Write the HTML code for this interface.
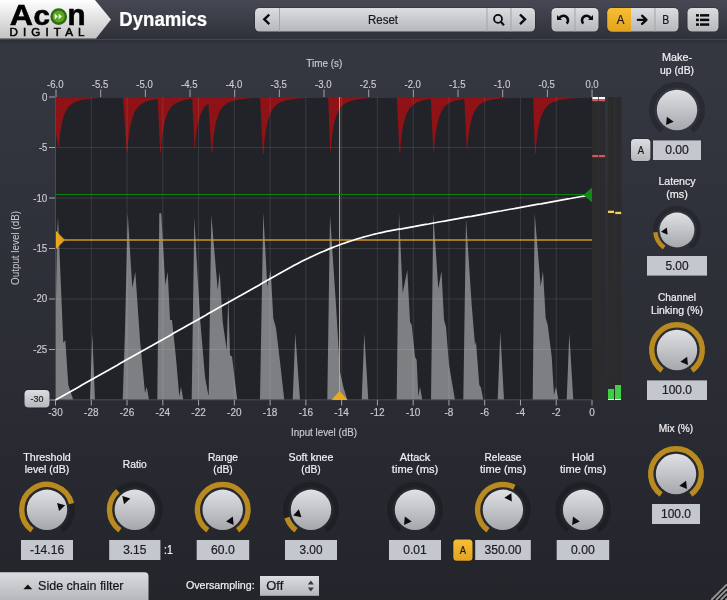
<!DOCTYPE html>
<html><head><meta charset="utf-8"><title>Dynamics</title><style>html,body{margin:0;padding:0;background:#24252b;overflow:hidden}svg{display:block;will-change:transform}</style></head><body>
<svg width="727" height="600" viewBox="0 0 727 600" font-family="Liberation Sans, sans-serif">
<defs>
<linearGradient id="gBody" x1="0" y1="0" x2="0" y2="1"><stop offset="0" stop-color="#363943"/><stop offset="1" stop-color="#24252b"/></linearGradient>
<linearGradient id="gHead" x1="0" y1="0" x2="0" y2="1"><stop offset="0" stop-color="#464954"/><stop offset="1" stop-color="#2f3139"/></linearGradient>
<linearGradient id="gLogo" x1="0" y1="0" x2="0" y2="1"><stop offset="0" stop-color="#ffffff"/><stop offset="1" stop-color="#c2c2c2"/></linearGradient>
<linearGradient id="gBtn" x1="0" y1="0" x2="0" y2="1"><stop offset="0" stop-color="#dcdde0"/><stop offset="1" stop-color="#b6b7bc"/></linearGradient>
<linearGradient id="gYel" x1="0" y1="0" x2="0" y2="1"><stop offset="0" stop-color="#f7be33"/><stop offset="1" stop-color="#e3a320"/></linearGradient>
<linearGradient id="gKnob" x1="0" y1="0" x2="0" y2="1"><stop offset="0" stop-color="#e0e1e5"/><stop offset="1" stop-color="#a6a7ac"/></linearGradient>
<linearGradient id="gTri" x1="0" y1="0" x2="1" y2="0"><stop offset="0" stop-color="#ecaa1f"/><stop offset="1" stop-color="#d8981a"/></linearGradient>
<linearGradient id="gSh" x1="0" y1="0" x2="0" y2="1"><stop offset="0" stop-color="#000" stop-opacity="0.16"/><stop offset="1" stop-color="#000" stop-opacity="0"/></linearGradient>
<clipPath id="cpPlot"><rect x="56" y="97" width="536" height="303"/></clipPath>
</defs>
<rect x="0" y="0" width="727" height="600" fill="url(#gBody)"/>
<rect x="0" y="0" width="727" height="39" fill="url(#gHead)"/>
<rect x="0" y="39" width="727" height="1" fill="#444752"/>
<rect x="0" y="40" width="727" height="5" fill="url(#gSh)"/>
<polygon points="0,0 95,0 111,19.6 96,38.6 0,38.6" fill="url(#gLogo)"/>
<text transform="translate(9.86,24.6) scale(0.3221,0.3038)" font-size="100" font-weight="bold" fill="#000" stroke="#000" stroke-width="1.86">A</text>
<text transform="translate(33.61,24.6) scale(0.2960,0.2855)" font-size="100" font-weight="bold" fill="#000" stroke="#000" stroke-width="2.03">c</text>
<text transform="translate(67.42,24.6) scale(0.2959,0.2944)" font-size="100" font-weight="bold" fill="#000" stroke="#000" stroke-width="2.03">n</text>
<circle cx="58.7" cy="16.55" r="7.2" fill="#5aa41f" stroke="#2f6a12" stroke-width="2.3"/>
<polygon points="54.6,13.6 58,16.5 54.6,19.4" fill="#e8f5d8"/><polygon points="58.6,13.6 62,16.5 58.6,19.4" fill="#e8f5d8"/>
<text x="9.5" y="35.9" font-size="11.6" fill="#000" textLength="75" lengthAdjust="spacing" stroke="#000" stroke-width="0.55">DIGITAL</text>
<text x="119.3" y="26" font-size="19.5" fill="#ffffff" text-anchor="start" textLength="87.8" lengthAdjust="spacingAndGlyphs" font-weight="bold" stroke="#ffffff" stroke-width="0.22" >Dynamics</text>
<rect x="254.2" y="7.2" width="281.6" height="25.1" rx="5.3" ry="5.3" fill="#000" fill-opacity="0.2"/>
<rect x="255" y="8" width="280" height="23.5" rx="4.5" ry="4.5" fill="url(#gBtn)"/>
<rect x="279.0" y="8" width="1" height="23.5" fill="#a4a5aa"/>
<rect x="486.5" y="8" width="1" height="23.5" fill="#a4a5aa"/>
<rect x="510.5" y="8" width="1" height="23.5" fill="#a4a5aa"/>
<polyline points="269.3,14.5 264.3,19.3 269.3,24.1" fill="none" stroke="#0a0a0a" stroke-width="2.4"/>
<text x="383" y="24" font-size="12.5" fill="#1a1a1a" text-anchor="middle" textLength="30" lengthAdjust="spacingAndGlyphs" stroke="#1a1a1a" stroke-width="0.22" >Reset</text>
<circle cx="498" cy="18.9" r="3.95" fill="none" stroke="#0a0a0a" stroke-width="1.8"/><line x1="500.8" y1="21.7" x2="504" y2="25.2" stroke="#0a0a0a" stroke-width="2.1"/>
<polyline points="520,14.5 525,19.3 520,24.1" fill="none" stroke="#0a0a0a" stroke-width="2.4"/>
<rect x="550.7" y="7.2" width="48.6" height="25.1" rx="5.3" ry="5.3" fill="#000" fill-opacity="0.2"/>
<rect x="551.5" y="8" width="47" height="23.5" rx="4.5" ry="4.5" fill="url(#gBtn)"/>
<rect x="574.5" y="8" width="1" height="23.5" fill="#a4a5aa"/>
<g><path d="M559.34,18.24 A4.6,4.6 0 1 1 566.76,23.54" fill="none" stroke="#0a0a0a" stroke-width="2.6"/><polygon points="557,14.9 557,19.9 562,19.9" fill="#0a0a0a"/></g>
<g transform="translate(1150,0) scale(-1,1)"><path d="M559.34,18.24 A4.6,4.6 0 1 1 566.76,23.54" fill="none" stroke="#0a0a0a" stroke-width="2.6"/><polygon points="557,14.9 557,19.9 562,19.9" fill="#0a0a0a"/></g>
<rect x="606.7" y="7.2" width="72.6" height="25.1" rx="5.3" ry="5.3" fill="#000" fill-opacity="0.2"/>
<rect x="607.5" y="8" width="71" height="23.5" rx="4.5" ry="4.5" fill="url(#gBtn)"/>
<path d="M612,8 h19 v23.5 h-19 a4.5,4.5 0 0 1 -4.5,-4.5 v-14.5 a4.5,4.5 0 0 1 4.5,-4.5z" fill="url(#gYel)"/>
<rect x="654.5" y="8" width="1" height="23.5" fill="#a4a5aa"/>
<text x="620.5" y="23.9" font-size="12.4" fill="#1a1a1a" text-anchor="middle" textLength="7.6" lengthAdjust="spacingAndGlyphs" stroke="#1a1a1a" stroke-width="0.22" >A</text>
<text x="665.7" y="23.9" font-size="12.4" fill="#1a1a1a" text-anchor="middle" textLength="7" lengthAdjust="spacingAndGlyphs" stroke="#1a1a1a" stroke-width="0.22" >B</text>
<path d="M637.8,19.8 H646.2 M642.1,15.7 L646.5,19.8 L642.1,23.9" fill="none" stroke="#0a0a0a" stroke-width="2.3" stroke-linecap="round" stroke-linejoin="round"/>
<rect x="686.7" y="7.2" width="32.6" height="25.1" rx="5.3" ry="5.3" fill="#000" fill-opacity="0.2"/>
<rect x="687.5" y="8" width="31" height="23.5" rx="4.5" ry="4.5" fill="url(#gBtn)"/>
<rect x="696" y="14.1" width="2.9" height="2.5" fill="#0a0a0a"/><rect x="700" y="14.1" width="9.2" height="2.5" fill="#0a0a0a"/>
<rect x="696" y="18.65" width="2.9" height="2.5" fill="#0a0a0a"/><rect x="700" y="18.65" width="9.2" height="2.5" fill="#0a0a0a"/>
<rect x="696" y="23.3" width="2.9" height="2.5" fill="#0a0a0a"/><rect x="700" y="23.3" width="9.2" height="2.5" fill="#0a0a0a"/>
<rect x="56" y="97" width="536" height="303" fill="#222328"/>
<g clip-path="url(#cpPlot)"><polygon fill="#8f1216" points="56.0,97.0 56.0,134.1 58.2,146.4 59.2,146.4 59.2,141.2 60.0,134.7 60.7,129.5 61.5,125.3 62.2,121.8 63.0,118.8 63.7,116.4 64.5,114.3 65.2,112.5 66.0,110.9 66.7,109.6 67.5,108.4 68.2,107.4 69.0,106.5 69.7,105.7 70.5,105.0 71.2,104.4 72.0,103.8 72.7,103.3 73.5,102.9 74.2,102.5 75.0,102.1 75.7,101.8 76.5,101.5 77.2,101.2 78.0,100.9 78.7,100.7 79.5,100.5 80.2,100.3 81.0,100.1 81.7,99.9 82.5,99.8 83.2,99.6 84.0,99.5 84.7,99.4 85.5,99.3 86.2,99.2 87.0,99.1 87.7,99.0 88.5,98.9 89.2,98.8 90.0,98.7 90.7,98.6 91.5,98.6 92.2,98.5 93.0,98.4 93.7,98.4 94.5,98.3 95.2,98.3 96.0,98.2 96.7,98.2 97.5,98.1 98.2,98.1 99.0,98.1 99.7,98.0 100.5,98.0 101.2,97.9 102.0,97.9 102.7,97.9 103.5,97.9 104.2,97.8 105.0,97.8 105.7,97.8 106.5,97.7 107.2,97.7 108.0,97.7 108.7,97.7 109.5,97.7 110.2,97.6 111.0,97.6 111.7,97.6 112.5,97.6 113.2,97.6 114.0,97.6 114.7,97.5 115.5,97.5 116.2,97.5 117.0,97.5 117.7,97.5 118.5,97.5 119.2,97.5 120.0,97.4 120.7,97.4 121.5,97.4 122.2,97.4 123.0,97.4 123.0,97.4 123.0,97.4 126.7,152.4 127.7,152.4 127.7,146.6 128.4,139.3 129.2,133.5 129.9,128.7 130.7,124.8 131.4,121.5 132.2,118.7 132.9,116.4 133.7,114.4 134.4,112.6 135.2,111.1 135.9,109.8 136.7,108.7 137.4,107.7 138.2,106.8 138.9,106.0 139.7,105.3 140.4,104.7 141.2,104.1 141.9,103.6 142.7,103.2 143.4,102.7 144.2,102.4 144.9,102.0 145.7,101.7 146.4,101.4 147.2,101.2 147.9,100.9 148.7,100.7 149.4,100.5 150.2,100.3 150.9,100.1 151.7,100.0 152.4,99.8 153.2,99.7 153.9,99.5 154.7,99.4 155.4,99.3 156.2,99.2 156.9,99.1 157.7,99.0 157.7,99.0 160.1,152.4 161.1,152.4 161.1,146.6 161.8,139.3 162.6,133.5 163.3,128.7 164.1,124.8 164.8,121.5 165.6,118.7 166.3,116.4 167.1,114.4 167.8,112.6 168.6,111.1 169.3,109.8 170.1,108.7 170.8,107.7 171.6,106.8 172.3,106.0 173.1,105.3 173.8,104.7 174.6,104.1 175.3,103.6 176.1,103.2 176.8,102.7 177.6,102.4 178.3,102.0 179.1,101.7 179.8,101.4 180.6,101.2 181.3,100.9 182.1,100.7 182.8,100.5 183.6,100.3 184.3,100.1 185.1,100.0 185.8,99.8 186.6,99.7 187.3,99.5 188.1,99.4 188.8,99.3 189.6,99.2 190.3,99.1 191.1,99.0 191.8,98.9 192.3,98.9 192.3,98.9 194.3,147.0 195.3,147.0 195.3,141.7 196.1,135.2 196.8,129.9 197.6,125.6 198.3,122.1 199.1,119.1 199.8,116.6 200.6,114.5 201.3,112.7 202.1,111.1 202.8,109.8 203.6,108.6 204.3,107.5 205.1,106.6 205.8,105.8 206.6,105.1 207.3,104.5 208.1,103.9 208.4,103.7 208.4,103.7 211.5,152.4 212.5,152.4 212.5,146.6 213.2,139.3 214.0,133.5 214.8,128.7 215.5,124.8 216.2,121.5 217.0,118.7 217.8,116.4 218.5,114.4 219.2,112.6 220.0,111.1 220.8,109.8 221.5,108.7 222.2,107.7 223.0,106.8 223.8,106.0 224.5,105.3 225.2,104.7 226.0,104.1 226.8,103.6 227.5,103.2 228.2,102.7 229.0,102.4 229.8,102.0 230.5,101.7 231.2,101.4 232.0,101.2 232.8,100.9 233.5,100.7 234.2,100.5 235.0,100.3 235.8,100.1 236.5,100.0 237.2,99.8 238.0,99.7 238.8,99.5 239.5,99.4 240.2,99.3 241.0,99.2 241.8,99.1 242.5,99.0 243.2,98.9 244.0,98.8 244.8,98.8 245.5,98.7 246.2,98.6 247.0,98.5 247.8,98.5 248.5,98.4 249.2,98.4 250.0,98.3 250.8,98.3 251.5,98.2 252.2,98.2 253.0,98.1 253.8,98.1 254.5,98.1 255.2,98.0 256.0,98.0 256.8,98.0 257.5,97.9 258.2,97.9 259.0,97.9 259.8,97.8 260.1,97.8 260.1,97.8 262.8,153.9 263.8,153.9 263.8,147.9 264.6,140.5 265.3,134.5 266.1,129.6 266.8,125.5 267.6,122.1 268.3,119.3 269.1,116.9 269.8,114.8 270.6,113.0 271.3,111.5 272.1,110.2 272.8,109.0 273.6,108.0 274.3,107.1 275.1,106.2 275.8,105.5 276.6,104.9 277.3,104.3 278.1,103.8 278.8,103.3 279.6,102.9 280.3,102.5 281.1,102.2 281.8,101.8 282.6,101.5 283.3,101.3 284.1,101.0 284.8,100.8 285.6,100.6 286.3,100.4 287.1,100.2 287.8,100.0 288.6,99.9 289.3,99.7 290.1,99.6 290.8,99.5 291.6,99.4 292.3,99.3 293.1,99.2 293.8,99.1 294.6,99.0 295.3,98.9 296.1,98.8 296.8,98.7 297.6,98.7 298.3,98.6 299.1,98.5 299.8,98.5 300.6,98.4 301.3,98.4 302.1,98.3 302.8,98.3 303.6,98.2 304.3,98.2 305.1,98.1 305.8,98.1 306.6,98.1 307.3,98.0 308.1,98.0 308.8,98.0 309.6,97.9 310.3,97.9 311.1,97.9 311.8,97.8 312.6,97.8 313.3,97.8 314.1,97.8 314.8,97.7 315.6,97.7 316.3,97.7 317.1,97.7 317.8,97.7 318.6,97.6 319.3,97.6 320.1,97.6 320.8,97.6 321.6,97.6 322.3,97.6 323.1,97.5 323.8,97.5 324.6,97.5 325.3,97.5 326.1,97.5 326.8,97.5 327.6,97.5 328.2,97.5 328.2,97.5 330.1,150.6 331.1,150.6 331.1,145.0 331.9,138.0 332.6,132.3 333.4,127.7 334.1,123.9 334.9,120.7 335.6,118.0 336.4,115.7 337.1,113.8 337.9,112.1 338.6,110.7 339.4,109.4 340.1,108.3 340.9,107.3 341.6,106.5 342.4,105.7 343.1,105.0 343.9,104.4 344.6,103.9 345.4,103.4 346.1,103.0 346.9,102.5 347.6,102.2 348.4,101.9 349.1,101.6 349.9,101.3 350.6,101.0 351.4,100.8 352.1,100.6 352.9,100.4 353.6,100.2 354.4,100.0 355.1,99.9 355.9,99.7 356.6,99.6 357.4,99.5 358.1,99.3 358.9,99.2 359.6,99.1 360.4,99.0 361.1,98.9 361.9,98.9 362.6,98.8 363.4,98.7 364.1,98.6 364.9,98.6 365.6,98.5 366.4,98.4 367.1,98.4 367.9,98.3 368.6,98.3 369.4,98.2 370.1,98.2 370.9,98.1 371.6,98.1 372.4,98.1 373.1,98.0 373.9,98.0 374.6,98.0 375.4,97.9 376.1,97.9 376.9,97.9 377.6,97.8 378.4,97.8 379.1,97.8 379.9,97.8 380.6,97.7 381.4,97.7 382.1,97.7 382.9,97.7 383.6,97.7 384.4,97.6 385.1,97.6 385.9,97.6 386.6,97.6 387.4,97.6 388.1,97.6 388.9,97.5 389.6,97.5 390.4,97.5 391.1,97.5 391.9,97.5 392.6,97.5 393.4,97.5 394.1,97.4 394.9,97.4 395.6,97.4 396.4,97.4 396.9,97.4 396.9,97.4 399.4,153.1 400.4,153.1 400.4,147.2 401.1,139.9 401.9,133.9 402.6,129.1 403.4,125.1 404.1,121.8 404.9,119.0 405.6,116.6 406.4,114.6 407.1,112.8 407.9,111.3 408.6,110.0 409.4,108.8 410.1,107.8 410.9,106.9 411.6,106.1 412.4,105.4 413.1,104.8 413.9,104.2 414.6,103.7 415.4,103.2 416.1,102.8 416.9,102.4 417.6,102.1 418.4,101.8 419.1,101.5 419.9,101.2 420.6,101.0 421.4,100.7 422.1,100.5 422.9,100.3 423.6,100.2 424.4,100.0 425.1,99.8 425.9,99.7 426.6,99.6 427.4,99.4 428.1,99.3 428.9,99.2 429.6,99.1 430.4,99.0 430.8,99.0 430.8,99.0 433.3,151.4 434.3,151.4 434.3,145.7 435.1,138.6 435.8,132.8 436.6,128.1 437.3,124.3 438.1,121.0 438.8,118.3 439.6,116.0 440.3,114.0 441.1,112.3 441.8,110.9 442.6,109.6 443.3,108.5 444.1,107.5 444.8,106.6 445.6,105.8 446.3,105.2 447.1,104.5 447.8,104.0 448.6,103.5 449.3,103.0 450.1,102.6 450.8,102.3 451.6,101.9 452.3,101.6 453.1,101.3 453.8,101.1 454.6,100.8 455.3,100.6 456.1,100.4 456.8,100.2 457.6,100.1 458.3,99.9 459.1,99.8 459.8,99.6 460.6,99.5 461.3,99.4 462.1,99.3 462.8,99.2 463.6,99.1 464.3,99.0 464.3,99.0 466.7,148.7 467.7,148.7 467.7,143.3 468.4,136.5 469.2,131.0 469.9,126.6 470.7,122.9 471.4,119.8 472.2,117.3 472.9,115.1 473.7,113.2 474.4,111.6 475.2,110.2 475.9,109.0 476.7,107.9 477.4,107.0 478.2,106.1 478.9,105.4 479.7,104.8 480.4,104.2 481.2,103.6 481.9,103.2 482.7,102.7 483.4,102.4 484.2,102.0 484.9,101.7 485.7,101.4 486.4,101.1 487.2,100.9 487.9,100.7 488.7,100.4 489.4,100.3 490.2,100.1 490.9,99.9 491.7,99.8 492.4,99.6 493.2,99.5 493.9,99.4 494.7,99.3 495.4,99.1 496.2,99.1 496.9,99.0 497.7,98.9 498.4,98.8 499.2,98.7 499.9,98.6 500.7,98.6 501.4,98.5 502.2,98.4 502.9,98.4 503.7,98.3 504.4,98.3 505.2,98.2 505.9,98.2 506.7,98.1 507.4,98.1 508.2,98.1 508.9,98.0 509.7,98.0 510.4,98.0 511.2,97.9 511.9,97.9 512.7,97.9 513.5,97.8 514.2,97.8 515.0,97.8 515.7,97.8 516.5,97.7 517.2,97.7 518.0,97.7 518.7,97.7 519.5,97.7 520.2,97.6 521.0,97.6 521.7,97.6 522.5,97.6 523.2,97.6 524.0,97.5 524.7,97.5 525.5,97.5 526.2,97.5 527.0,97.5 527.7,97.5 528.5,97.5 529.2,97.5 530.0,97.4 530.7,97.4 531.5,97.4 532.2,97.4 533.0,97.4 533.1,97.4 533.1,97.4 535.0,153.1 536.0,153.1 536.0,147.2 536.8,139.9 537.5,133.9 538.2,129.1 539.0,125.1 539.8,121.8 540.5,119.0 541.2,116.6 542.0,114.6 542.8,112.8 543.5,111.3 544.2,110.0 545.0,108.8 545.8,107.8 546.5,106.9 547.2,106.1 548.0,105.4 548.8,104.8 549.5,104.2 550.2,103.7 551.0,103.2 551.8,102.8 552.5,102.4 553.2,102.1 554.0,101.8 554.8,101.5 555.5,101.2 556.2,101.0 557.0,100.7 557.8,100.5 558.5,100.3 559.2,100.2 560.0,100.0 560.8,99.8 561.5,99.7 562.2,99.6 563.0,99.4 563.8,99.3 564.5,99.2 565.2,99.1 566.0,99.0 566.8,98.9 567.5,98.9 568.2,98.8 569.0,98.7 569.8,98.6 570.5,98.6 571.2,98.5 572.0,98.4 572.8,98.4 573.5,98.3 574.2,98.3 575.0,98.2 575.8,98.2 576.5,98.2 577.2,98.1 578.0,98.1 578.8,98.0 579.5,98.0 580.2,98.0 581.0,97.9 581.8,97.9 582.5,97.9 583.2,97.9 584.0,97.8 584.8,97.8 585.5,97.8 586.2,97.8 587.0,97.7 587.8,97.7 588.5,97.7 589.2,97.7 590.0,97.6 590.8,97.6 591.5,97.6 592.0,97.6 592.0,97.0"/>
<rect x="56" y="96.5" width="536" height="1.3" fill="#7a1a1c"/>
<polygon fill="#ffffff" fill-opacity="0.42" points="56.0,400.0 56.0,300.0 57.0,235.0 58.0,216.7 59.0,240.0 63.3,343.0 65.3,340.0 68.3,385.0 73.3,400.0"/>
<polygon fill="#ffffff" fill-opacity="0.42" points="90.0,400.0 92.3,333.0 95.0,400.0"/>
<polygon fill="#ffffff" fill-opacity="0.42" points="122.7,400.0 125.0,330.0 127.7,213.3 132.3,288.0 135.3,271.7 140.0,340.0 145.0,393.0 146.7,386.7 149.0,400.0"/>
<polygon fill="#ffffff" fill-opacity="0.42" points="157.3,400.0 159.3,213.3 161.3,213.3 165.3,285.0 167.7,271.7 170.0,320.0 172.0,320.0 176.0,358.0 179.3,396.7 181.0,386.7 183.3,400.0"/>
<polygon fill="#ffffff" fill-opacity="0.42" points="191.7,400.0 194.3,217.7 200.0,318.0 205.0,376.7 208.3,395.0 208.7,395.0 211.3,215.0 217.7,290.0 219.7,271.7 222.7,321.7 226.7,350.0 228.3,295.0 230.0,355.0 232.0,356.7 237.3,400.0"/>
<polygon fill="#ffffff" fill-opacity="0.42" points="260.0,400.0 263.3,212.3 267.3,286.7 270.7,270.0 273.3,318.3 276.0,328.0 280.0,361.7 284.3,400.0"/>
<polygon fill="#ffffff" fill-opacity="0.42" points="292.7,400.0 295.3,333.3 300.0,400.0"/>
<polygon fill="#ffffff" fill-opacity="0.42" points="327.3,400.0 330.0,215.0 336.0,305.0 340.0,371.7 343.3,386.7 347.3,400.0"/>
<polygon fill="#ffffff" fill-opacity="0.42" points="361.7,400.0 364.3,333.3 368.3,400.0"/>
<polygon fill="#ffffff" fill-opacity="0.42" points="396.7,400.0 399.0,212.3 402.7,293.3 407.3,270.0 410.0,321.7 411.7,325.0 415.0,356.7 416.7,360.0 418.3,396.7 420.0,386.7 422.3,400.0"/>
<polygon fill="#ffffff" fill-opacity="0.42" points="431.0,400.0 433.3,213.3 438.3,289.0 441.5,271.0 444.0,320.0 446.0,326.7 449.0,365.0 455.0,400.0"/>
<polygon fill="#ffffff" fill-opacity="0.42" points="463.3,400.0 466.0,218.3 471.7,305.0 475.0,345.0 476.0,341.7 479.3,385.0 481.0,387.7 483.3,400.0"/>
<polygon fill="#ffffff" fill-opacity="0.42" points="497.7,400.0 500.3,331.7 504.0,400.0"/>
<polygon fill="#ffffff" fill-opacity="0.42" points="532.7,400.0 534.7,213.3 540.7,286.7 543.0,271.0 545.7,318.3 547.7,325.0 551.7,356.7 554.0,395.0 556.0,386.7 558.3,400.0"/>
<polygon fill="#ffffff" fill-opacity="0.42" points="566.7,400.0 569.3,333.3 573.3,400.0"/>
</g>
<rect x="90.77" y="97" width="1" height="303" fill="#fff" fill-opacity="0.105"/>
<rect x="126.53" y="97" width="1" height="303" fill="#fff" fill-opacity="0.105"/>
<rect x="162.30" y="97" width="1" height="303" fill="#fff" fill-opacity="0.105"/>
<rect x="198.07" y="97" width="1" height="303" fill="#fff" fill-opacity="0.105"/>
<rect x="233.83" y="97" width="1" height="303" fill="#fff" fill-opacity="0.105"/>
<rect x="269.60" y="97" width="1" height="303" fill="#fff" fill-opacity="0.105"/>
<rect x="305.37" y="97" width="1" height="303" fill="#fff" fill-opacity="0.105"/>
<rect x="341.13" y="97" width="1" height="303" fill="#fff" fill-opacity="0.105"/>
<rect x="376.90" y="97" width="1" height="303" fill="#fff" fill-opacity="0.105"/>
<rect x="412.67" y="97" width="1" height="303" fill="#fff" fill-opacity="0.105"/>
<rect x="448.43" y="97" width="1" height="303" fill="#fff" fill-opacity="0.105"/>
<rect x="484.20" y="97" width="1" height="303" fill="#fff" fill-opacity="0.105"/>
<rect x="519.97" y="97" width="1" height="303" fill="#fff" fill-opacity="0.105"/>
<rect x="555.73" y="97" width="1" height="303" fill="#fff" fill-opacity="0.105"/>
<rect x="56" y="147.00" width="536" height="1" fill="#fff" fill-opacity="0.105"/>
<rect x="56" y="197.50" width="536" height="1" fill="#fff" fill-opacity="0.105"/>
<rect x="56" y="248.00" width="536" height="1" fill="#fff" fill-opacity="0.105"/>
<rect x="56" y="298.50" width="536" height="1" fill="#fff" fill-opacity="0.105"/>
<rect x="56" y="349.00" width="536" height="1" fill="#fff" fill-opacity="0.105"/>
<rect x="55" y="97" width="1" height="303" fill="#4b4c53"/>
<rect x="55" y="399.3" width="537" height="1" fill="#4b4c53"/>
<rect x="56" y="239" width="536" height="2" fill="#d9981c" fill-opacity="0.72"/>
<rect x="339" y="97" width="1.05" height="303" fill="#f7aa14" fill-opacity="0.9"/>
<polygon points="56,231 56,249 65,240" fill="url(#gTri)"/>
<polygon points="331.5,400 347.5,400 339.5,391" fill="#eaa91f"/>
<rect x="56" y="194" width="530" height="1" fill="#0f8212"/>
<polyline fill="none" stroke="#ffffff" stroke-width="1.7" stroke-linejoin="round" points="55.5,400.0 58.2,398.5 60.9,397.0 63.5,395.5 66.2,393.9 68.9,392.4 71.6,390.9 74.3,389.4 77.0,387.9 79.6,386.4 82.3,384.8 85.0,383.3 87.7,381.8 90.4,380.3 93.1,378.8 95.7,377.3 98.4,375.8 101.1,374.2 103.8,372.7 106.5,371.2 109.2,369.7 111.8,368.2 114.5,366.7 117.2,365.2 119.9,363.6 122.6,362.1 125.2,360.6 127.9,359.1 130.6,357.6 133.3,356.1 136.0,354.6 138.7,353.0 141.3,351.5 144.0,350.0 146.7,348.5 149.4,347.0 152.1,345.5 154.8,343.9 157.4,342.4 160.1,340.9 162.8,339.4 165.5,337.9 168.2,336.4 170.8,334.9 173.5,333.3 176.2,331.8 178.9,330.3 181.6,328.8 184.3,327.3 186.9,325.8 189.6,324.2 192.3,322.7 195.0,321.2 197.7,319.7 200.4,318.2 203.0,316.7 205.7,315.2 208.4,313.6 211.1,312.1 213.8,310.6 216.4,309.1 219.1,307.6 221.8,306.1 224.5,304.6 227.2,303.0 229.9,301.5 232.5,300.0 235.2,298.5 237.9,297.0 240.6,295.5 243.3,293.9 246.0,292.4 248.6,290.9 251.3,289.4 254.0,287.9 256.7,286.4 259.4,284.9 262.1,283.3 264.7,281.8 267.4,280.3 270.1,278.8 272.8,277.3 275.5,275.8 278.1,274.3 280.8,272.7 283.5,271.2 286.2,269.7 288.9,268.2 291.6,266.8 294.2,265.3 296.9,263.9 299.6,262.5 302.3,261.1 305.0,259.8 307.7,258.5 310.3,257.2 313.0,256.0 315.7,254.7 318.4,253.5 321.1,252.3 323.8,251.2 326.4,250.1 329.1,248.9 331.8,247.9 334.5,246.8 337.2,245.8 339.8,244.8 342.5,243.8 345.2,242.9 347.9,241.9 350.6,241.0 353.3,240.2 355.9,239.3 358.6,238.5 361.3,237.7 364.0,236.9 366.7,236.2 369.4,235.5 372.0,234.8 374.7,234.1 377.4,233.5 380.1,232.9 382.8,232.3 385.4,231.7 388.1,231.2 390.8,230.7 393.5,230.2 396.2,229.7 398.9,229.2 401.5,228.8 404.2,228.3 406.9,227.8 409.6,227.3 412.3,226.8 415.0,226.4 417.6,225.9 420.3,225.4 423.0,224.9 425.7,224.4 428.4,224.0 431.1,223.5 433.7,223.0 436.4,222.5 439.1,222.0 441.8,221.5 444.5,221.1 447.1,220.6 449.8,220.1 452.5,219.6 455.2,219.1 457.9,218.7 460.6,218.2 463.2,217.7 465.9,217.2 468.6,216.7 471.3,216.3 474.0,215.8 476.7,215.3 479.3,214.8 482.0,214.3 484.7,213.9 487.4,213.4 490.1,212.9 492.7,212.4 495.4,211.9 498.1,211.4 500.8,211.0 503.5,210.5 506.2,210.0 508.8,209.5 511.5,209.0 514.2,208.6 516.9,208.1 519.6,207.6 522.3,207.1 524.9,206.6 527.6,206.2 530.3,205.7 533.0,205.2 535.7,204.7 538.4,204.2 541.0,203.8 543.7,203.3 546.4,202.8 549.1,202.3 551.8,201.8 554.4,201.3 557.1,200.9 559.8,200.4 562.5,199.9 565.2,199.4 567.9,198.9 570.5,198.5 573.2,198.0 575.9,197.5 578.6,197.0 581.3,196.5 584.0,196.1 586.6,195.6 589.3,195.1 592.0,194.6"/>
<polygon points="583.5,195 592,187.5 592,202.5" fill="#138a16"/>
<rect x="592" y="97" width="6.3" height="303" fill="#2b2b2c"/>
<rect x="598.8" y="97" width="6.4" height="303" fill="#2b2b2c"/>
<rect x="607.7" y="97" width="6.5" height="303" fill="#2b2b2c"/>
<rect x="615" y="97" width="6.5" height="303" fill="#2b2b2c"/>
<rect x="592.3" y="97" width="6" height="2.3" fill="#ffffff"/><rect x="592.3" y="99.3" width="6" height="1.9" fill="#d9575c"/>
<rect x="592.3" y="155" width="6" height="2.2" fill="#d9575c"/>
<rect x="599" y="97" width="6" height="2.3" fill="#ffffff"/><rect x="599" y="99.3" width="6" height="1.9" fill="#d9575c"/>
<rect x="599" y="155" width="6" height="2.2" fill="#d9575c"/>
<rect x="608" y="210.7" width="6" height="2.3" fill="#f1d451"/><rect x="615.2" y="211.8" width="6" height="2.3" fill="#f1d451"/>
<rect x="608" y="389" width="6" height="10" fill="#3fcf45"/><rect x="615" y="385" width="6" height="14" fill="#3fcf45"/>
<rect x="608" y="399" width="6" height="1" fill="#fff"/><rect x="615" y="399" width="6" height="1" fill="#fff"/>
<rect x="55.50" y="89.5" width="1" height="7.5" fill="#a2a3a8"/>
<text x="55.3" y="87.6" font-size="10" fill="#cbccd0" text-anchor="middle" textLength="16.5" lengthAdjust="spacingAndGlyphs" stroke="#cbccd0" stroke-width="0.15" >-6.0</text>
<rect x="100.17" y="89.5" width="1" height="7.5" fill="#a2a3a8"/>
<text x="100.0" y="87.6" font-size="10" fill="#cbccd0" text-anchor="middle" textLength="16.5" lengthAdjust="spacingAndGlyphs" stroke="#cbccd0" stroke-width="0.15" >-5.5</text>
<rect x="144.84" y="89.5" width="1" height="7.5" fill="#a2a3a8"/>
<text x="144.6" y="87.6" font-size="10" fill="#cbccd0" text-anchor="middle" textLength="16.5" lengthAdjust="spacingAndGlyphs" stroke="#cbccd0" stroke-width="0.15" >-5.0</text>
<rect x="189.51" y="89.5" width="1" height="7.5" fill="#a2a3a8"/>
<text x="189.3" y="87.6" font-size="10" fill="#cbccd0" text-anchor="middle" textLength="16.5" lengthAdjust="spacingAndGlyphs" stroke="#cbccd0" stroke-width="0.15" >-4.5</text>
<rect x="234.18" y="89.5" width="1" height="7.5" fill="#a2a3a8"/>
<text x="234.0" y="87.6" font-size="10" fill="#cbccd0" text-anchor="middle" textLength="16.5" lengthAdjust="spacingAndGlyphs" stroke="#cbccd0" stroke-width="0.15" >-4.0</text>
<rect x="278.85" y="89.5" width="1" height="7.5" fill="#a2a3a8"/>
<text x="278.7" y="87.6" font-size="10" fill="#cbccd0" text-anchor="middle" textLength="16.5" lengthAdjust="spacingAndGlyphs" stroke="#cbccd0" stroke-width="0.15" >-3.5</text>
<rect x="323.52" y="89.5" width="1" height="7.5" fill="#a2a3a8"/>
<text x="323.3" y="87.6" font-size="10" fill="#cbccd0" text-anchor="middle" textLength="16.5" lengthAdjust="spacingAndGlyphs" stroke="#cbccd0" stroke-width="0.15" >-3.0</text>
<rect x="368.19" y="89.5" width="1" height="7.5" fill="#a2a3a8"/>
<text x="368.0" y="87.6" font-size="10" fill="#cbccd0" text-anchor="middle" textLength="16.5" lengthAdjust="spacingAndGlyphs" stroke="#cbccd0" stroke-width="0.15" >-2.5</text>
<rect x="412.86" y="89.5" width="1" height="7.5" fill="#a2a3a8"/>
<text x="412.7" y="87.6" font-size="10" fill="#cbccd0" text-anchor="middle" textLength="16.5" lengthAdjust="spacingAndGlyphs" stroke="#cbccd0" stroke-width="0.15" >-2.0</text>
<rect x="457.53" y="89.5" width="1" height="7.5" fill="#a2a3a8"/>
<text x="457.3" y="87.6" font-size="10" fill="#cbccd0" text-anchor="middle" textLength="16.5" lengthAdjust="spacingAndGlyphs" stroke="#cbccd0" stroke-width="0.15" >-1.5</text>
<rect x="502.20" y="89.5" width="1" height="7.5" fill="#a2a3a8"/>
<text x="502.0" y="87.6" font-size="10" fill="#cbccd0" text-anchor="middle" textLength="16.5" lengthAdjust="spacingAndGlyphs" stroke="#cbccd0" stroke-width="0.15" >-1.0</text>
<rect x="546.87" y="89.5" width="1" height="7.5" fill="#a2a3a8"/>
<text x="546.7" y="87.6" font-size="10" fill="#cbccd0" text-anchor="middle" textLength="16.5" lengthAdjust="spacingAndGlyphs" stroke="#cbccd0" stroke-width="0.15" >-0.5</text>
<rect x="591.54" y="89.5" width="1" height="7.5" fill="#a2a3a8"/>
<text x="592.0" y="87.6" font-size="10" fill="#cbccd0" text-anchor="middle" textLength="13.2" lengthAdjust="spacingAndGlyphs" stroke="#cbccd0" stroke-width="0.15" >0.0</text>
<text x="324.3" y="66.8" font-size="10.2" fill="#cbccd0" text-anchor="middle" textLength="36" lengthAdjust="spacingAndGlyphs" stroke="#cbccd0" stroke-width="0.15" >Time (s)</text>
<rect x="49" y="96.50" width="6" height="1" fill="#a2a3a8"/>
<text x="47.3" y="100.6" font-size="10" fill="#cbccd0" text-anchor="end" textLength="5.4" lengthAdjust="spacingAndGlyphs" stroke="#cbccd0" stroke-width="0.15" >0</text>
<rect x="49" y="147.00" width="6" height="1" fill="#a2a3a8"/>
<text x="47.3" y="151.0" font-size="10" fill="#cbccd0" text-anchor="end" textLength="8.4" lengthAdjust="spacingAndGlyphs" stroke="#cbccd0" stroke-width="0.15" >-5</text>
<rect x="49" y="197.50" width="6" height="1" fill="#a2a3a8"/>
<text x="47.3" y="201.5" font-size="10" fill="#cbccd0" text-anchor="end" textLength="14.1" lengthAdjust="spacingAndGlyphs" stroke="#cbccd0" stroke-width="0.15" >-10</text>
<rect x="49" y="248.00" width="6" height="1" fill="#a2a3a8"/>
<text x="47.3" y="251.9" font-size="10" fill="#cbccd0" text-anchor="end" textLength="14.1" lengthAdjust="spacingAndGlyphs" stroke="#cbccd0" stroke-width="0.15" >-15</text>
<rect x="49" y="298.50" width="6" height="1" fill="#a2a3a8"/>
<text x="47.3" y="302.3" font-size="10" fill="#cbccd0" text-anchor="end" textLength="14.1" lengthAdjust="spacingAndGlyphs" stroke="#cbccd0" stroke-width="0.15" >-20</text>
<rect x="49" y="349.00" width="6" height="1" fill="#a2a3a8"/>
<text x="47.3" y="352.8" font-size="10" fill="#cbccd0" text-anchor="end" textLength="14.1" lengthAdjust="spacingAndGlyphs" stroke="#cbccd0" stroke-width="0.15" >-25</text>
<rect x="49" y="399.50" width="6" height="1" fill="#a2a3a8"/>
<rect x="55.00" y="400" width="1" height="5.5" fill="#a2a3a8"/>
<text x="55.5" y="415.5" font-size="10" fill="#cbccd0" text-anchor="middle" stroke="#cbccd0" stroke-width="0.15" >-30</text>
<rect x="90.77" y="400" width="1" height="5.5" fill="#a2a3a8"/>
<text x="91.3" y="415.5" font-size="10" fill="#cbccd0" text-anchor="middle" stroke="#cbccd0" stroke-width="0.15" >-28</text>
<rect x="126.53" y="400" width="1" height="5.5" fill="#a2a3a8"/>
<text x="127.0" y="415.5" font-size="10" fill="#cbccd0" text-anchor="middle" stroke="#cbccd0" stroke-width="0.15" >-26</text>
<rect x="162.30" y="400" width="1" height="5.5" fill="#a2a3a8"/>
<text x="162.8" y="415.5" font-size="10" fill="#cbccd0" text-anchor="middle" stroke="#cbccd0" stroke-width="0.15" >-24</text>
<rect x="198.07" y="400" width="1" height="5.5" fill="#a2a3a8"/>
<text x="198.6" y="415.5" font-size="10" fill="#cbccd0" text-anchor="middle" stroke="#cbccd0" stroke-width="0.15" >-22</text>
<rect x="233.83" y="400" width="1" height="5.5" fill="#a2a3a8"/>
<text x="234.3" y="415.5" font-size="10" fill="#cbccd0" text-anchor="middle" stroke="#cbccd0" stroke-width="0.15" >-20</text>
<rect x="269.60" y="400" width="1" height="5.5" fill="#a2a3a8"/>
<text x="270.1" y="415.5" font-size="10" fill="#cbccd0" text-anchor="middle" stroke="#cbccd0" stroke-width="0.15" >-18</text>
<rect x="305.37" y="400" width="1" height="5.5" fill="#a2a3a8"/>
<text x="305.9" y="415.5" font-size="10" fill="#cbccd0" text-anchor="middle" stroke="#cbccd0" stroke-width="0.15" >-16</text>
<rect x="341.13" y="400" width="1" height="5.5" fill="#a2a3a8"/>
<text x="341.6" y="415.5" font-size="10" fill="#cbccd0" text-anchor="middle" stroke="#cbccd0" stroke-width="0.15" >-14</text>
<rect x="376.90" y="400" width="1" height="5.5" fill="#a2a3a8"/>
<text x="377.4" y="415.5" font-size="10" fill="#cbccd0" text-anchor="middle" stroke="#cbccd0" stroke-width="0.15" >-12</text>
<rect x="412.67" y="400" width="1" height="5.5" fill="#a2a3a8"/>
<text x="413.2" y="415.5" font-size="10" fill="#cbccd0" text-anchor="middle" stroke="#cbccd0" stroke-width="0.15" >-10</text>
<rect x="448.43" y="400" width="1" height="5.5" fill="#a2a3a8"/>
<text x="448.9" y="415.5" font-size="10" fill="#cbccd0" text-anchor="middle" stroke="#cbccd0" stroke-width="0.15" >-8</text>
<rect x="484.20" y="400" width="1" height="5.5" fill="#a2a3a8"/>
<text x="484.7" y="415.5" font-size="10" fill="#cbccd0" text-anchor="middle" stroke="#cbccd0" stroke-width="0.15" >-6</text>
<rect x="519.97" y="400" width="1" height="5.5" fill="#a2a3a8"/>
<text x="520.5" y="415.5" font-size="10" fill="#cbccd0" text-anchor="middle" stroke="#cbccd0" stroke-width="0.15" >-4</text>
<rect x="555.73" y="400" width="1" height="5.5" fill="#a2a3a8"/>
<text x="556.2" y="415.5" font-size="10" fill="#cbccd0" text-anchor="middle" stroke="#cbccd0" stroke-width="0.15" >-2</text>
<rect x="591.50" y="400" width="1" height="5.5" fill="#a2a3a8"/>
<text x="592.0" y="415.5" font-size="10" fill="#cbccd0" text-anchor="middle" stroke="#cbccd0" stroke-width="0.15" >0</text>
<text x="324" y="435.7" font-size="10.2" fill="#cbccd0" text-anchor="middle" textLength="66" lengthAdjust="spacingAndGlyphs" stroke="#cbccd0" stroke-width="0.15" >Input level (dB)</text>
<text transform="translate(19,248) rotate(-90)" font-size="10.2" fill="#cbccd0" text-anchor="middle" textLength="74" lengthAdjust="spacingAndGlyphs">Output level (dB)</text>
<rect x="23.7" y="389.2" width="26.6" height="19.200000000000003" rx="4.8" ry="4.8" fill="#000" fill-opacity="0.2"/>
<rect x="24.5" y="390" width="25" height="17.6" rx="4" ry="4" fill="url(#gBtn)"/>
<text x="37" y="402.2" font-size="9.4" fill="#1a1a1a" text-anchor="middle" textLength="12.9" lengthAdjust="spacingAndGlyphs" stroke="#1a1a1a" stroke-width="0.15" >-30</text>
<path d="M32.13,530.27 A25.3,25.3 0 1 1 61.87,530.27" fill="none" stroke="#000000" stroke-opacity="0.2" stroke-width="5.399999999999999"/>
<path d="M32.13,530.27 A25.3,25.3 0 1 1 71.55,503.68" fill="none" stroke="#b88a1f" stroke-width="5.399999999999999"/>
<circle cx="47" cy="509.8" r="20.2" fill="url(#gKnob)"/>
<polygon fill="#0c0c0e" points="65.13,505.28 59.09,511.11 57.06,502.96"/>
<text x="47" y="460.8" font-size="11.2" fill="#f0f0f2" text-anchor="middle" textLength="47.5" lengthAdjust="spacingAndGlyphs" stroke="#f0f0f2" stroke-width="0.22" >Threshold</text>
<text x="47" y="473.3" font-size="11.2" fill="#f0f0f2" text-anchor="middle" textLength="44.6" lengthAdjust="spacingAndGlyphs" stroke="#f0f0f2" stroke-width="0.22" >level (dB)</text>
<rect x="21" y="540" width="52" height="20" fill="#c5c7cf"/>
<text x="47.0" y="553.6" font-size="12" fill="#1d1e23" text-anchor="middle" textLength="34.2" lengthAdjust="spacingAndGlyphs" stroke="#1d1e23" stroke-width="0.22" >-14.16</text>
<path d="M119.93,530.27 A25.3,25.3 0 1 1 149.67,530.27" fill="none" stroke="#000000" stroke-opacity="0.2" stroke-width="5.399999999999999"/>
<path d="M119.93,530.27 A25.3,25.3 0 0 1 117.87,491.00" fill="none" stroke="#b88a1f" stroke-width="5.399999999999999"/>
<circle cx="134.8" cy="509.8" r="20.2" fill="url(#gKnob)"/>
<polygon fill="#0c0c0e" points="122.30,495.91 130.29,498.51 124.04,504.13"/>
<text x="134.8" y="467.5" font-size="11.2" fill="#f0f0f2" text-anchor="middle" textLength="24" lengthAdjust="spacingAndGlyphs" stroke="#f0f0f2" stroke-width="0.22" >Ratio</text>
<rect x="109.2" y="540" width="51.2" height="20" fill="#c5c7cf"/>
<text x="134.8" y="553.6" font-size="12" fill="#1d1e23" text-anchor="middle" textLength="23.3" lengthAdjust="spacingAndGlyphs" stroke="#1d1e23" stroke-width="0.22" >3.15</text>
<text x="164.1" y="553.6" font-size="12" fill="#f0f0f2" text-anchor="start" textLength="8.8" lengthAdjust="spacingAndGlyphs" stroke="#f0f0f2" stroke-width="0.22" >:1</text>
<path d="M207.83,530.27 A25.3,25.3 0 1 1 237.57,530.27" fill="none" stroke="#000000" stroke-opacity="0.2" stroke-width="5.399999999999999"/>
<path d="M207.83,530.27 A25.3,25.3 0 1 1 237.57,530.27" fill="none" stroke="#b88a1f" stroke-width="5.399999999999999"/>
<circle cx="222.7" cy="509.8" r="20.2" fill="url(#gKnob)"/>
<polygon fill="#0c0c0e" points="233.68,524.92 226.01,521.50 232.81,516.56"/>
<text x="223" y="460.8" font-size="11.2" fill="#f0f0f2" text-anchor="middle" textLength="30" lengthAdjust="spacingAndGlyphs" stroke="#f0f0f2" stroke-width="0.22" >Range</text>
<text x="223" y="473.3" font-size="11.2" fill="#f0f0f2" text-anchor="middle" textLength="19.4" lengthAdjust="spacingAndGlyphs" stroke="#f0f0f2" stroke-width="0.22" >(dB)</text>
<rect x="196.7" y="540" width="52.5" height="20" fill="#c5c7cf"/>
<text x="222.95" y="553.6" font-size="12" fill="#1d1e23" text-anchor="middle" textLength="23.7" lengthAdjust="spacingAndGlyphs" stroke="#1d1e23" stroke-width="0.22" >60.0</text>
<path d="M296.13,530.27 A25.3,25.3 0 1 1 325.87,530.27" fill="none" stroke="#000000" stroke-opacity="0.2" stroke-width="5.399999999999999"/>
<path d="M296.13,530.27 A25.3,25.3 0 0 1 286.94,517.62" fill="none" stroke="#b88a1f" stroke-width="5.399999999999999"/>
<circle cx="311" cy="509.8" r="20.2" fill="url(#gKnob)"/>
<polygon fill="#0c0c0e" points="293.23,515.57 298.85,509.33 301.44,517.32"/>
<text x="311" y="460.8" font-size="11.2" fill="#f0f0f2" text-anchor="middle" textLength="44.8" lengthAdjust="spacingAndGlyphs" stroke="#f0f0f2" stroke-width="0.22" >Soft knee</text>
<text x="311" y="473.3" font-size="11.2" fill="#f0f0f2" text-anchor="middle" textLength="19.4" lengthAdjust="spacingAndGlyphs" stroke="#f0f0f2" stroke-width="0.22" >(dB)</text>
<rect x="285" y="540" width="52" height="20" fill="#c5c7cf"/>
<text x="311.0" y="553.6" font-size="12" fill="#1d1e23" text-anchor="middle" textLength="23" lengthAdjust="spacingAndGlyphs" stroke="#1d1e23" stroke-width="0.22" >3.00</text>
<path d="M400.13,530.27 A25.3,25.3 0 1 1 429.87,530.27" fill="none" stroke="#000000" stroke-opacity="0.2" stroke-width="5.399999999999999"/>
<circle cx="415" cy="509.8" r="20.2" fill="url(#gKnob)"/>
<polygon fill="#0c0c0e" points="404.02,524.92 404.89,516.56 411.69,521.50"/>
<text x="415" y="460.8" font-size="11.2" fill="#f0f0f2" text-anchor="middle" textLength="30.4" lengthAdjust="spacingAndGlyphs" stroke="#f0f0f2" stroke-width="0.22" >Attack</text>
<text x="415" y="473.3" font-size="11.2" fill="#f0f0f2" text-anchor="middle" textLength="46.3" lengthAdjust="spacingAndGlyphs" stroke="#f0f0f2" stroke-width="0.22" >time (ms)</text>
<rect x="389" y="540" width="52" height="20" fill="#c5c7cf"/>
<text x="415.0" y="553.6" font-size="12" fill="#1d1e23" text-anchor="middle" textLength="23.5" lengthAdjust="spacingAndGlyphs" stroke="#1d1e23" stroke-width="0.22" >0.01</text>
<path d="M488.03,530.27 A25.3,25.3 0 1 1 517.77,530.27" fill="none" stroke="#000000" stroke-opacity="0.2" stroke-width="5.399999999999999"/>
<path d="M488.03,530.27 A25.3,25.3 0 0 1 514.39,487.26" fill="none" stroke="#b88a1f" stroke-width="5.399999999999999"/>
<circle cx="502.9" cy="509.8" r="20.2" fill="url(#gKnob)"/>
<polygon fill="#0c0c0e" points="511.38,493.15 511.82,501.54 504.34,497.72"/>
<text x="503" y="460.8" font-size="11.2" fill="#f0f0f2" text-anchor="middle" textLength="36.9" lengthAdjust="spacingAndGlyphs" stroke="#f0f0f2" stroke-width="0.22" >Release</text>
<text x="503" y="473.3" font-size="11.2" fill="#f0f0f2" text-anchor="middle" textLength="46.2" lengthAdjust="spacingAndGlyphs" stroke="#f0f0f2" stroke-width="0.22" >time (ms)</text>
<rect x="452.5" y="538.8000000000001" width="20.8" height="22.8" rx="4.3" ry="4.3" fill="#000" fill-opacity="0.2"/>
<rect x="453.3" y="539.6" width="19.2" height="21.2" rx="3.5" ry="3.5" fill="url(#gYel)"/>
<text x="462.9" y="553.8" font-size="10.8" fill="#1a1a1a" text-anchor="middle" textLength="6.3" lengthAdjust="spacingAndGlyphs" stroke="#1a1a1a" stroke-width="0.22" >A</text>
<rect x="475.2" y="540" width="55.6" height="20" fill="#c5c7cf"/>
<text x="503.0" y="553.6" font-size="12" fill="#1d1e23" text-anchor="middle" textLength="37" lengthAdjust="spacingAndGlyphs" stroke="#1d1e23" stroke-width="0.22" >350.00</text>
<path d="M568.23,530.27 A25.3,25.3 0 1 1 597.97,530.27" fill="none" stroke="#000000" stroke-opacity="0.2" stroke-width="5.399999999999999"/>
<circle cx="583.1" cy="509.8" r="20.2" fill="url(#gKnob)"/>
<polygon fill="#0c0c0e" points="572.12,524.92 572.99,516.56 579.79,521.50"/>
<text x="583" y="460.8" font-size="11.2" fill="#f0f0f2" text-anchor="middle" textLength="22" lengthAdjust="spacingAndGlyphs" stroke="#f0f0f2" stroke-width="0.22" >Hold</text>
<text x="583" y="473.3" font-size="11.2" fill="#f0f0f2" text-anchor="middle" textLength="46.2" lengthAdjust="spacingAndGlyphs" stroke="#f0f0f2" stroke-width="0.22" >time (ms)</text>
<rect x="556.7" y="540" width="52.5" height="20" fill="#c5c7cf"/>
<text x="582.95" y="553.6" font-size="12" fill="#1d1e23" text-anchor="middle" textLength="23.7" lengthAdjust="spacingAndGlyphs" stroke="#1d1e23" stroke-width="0.22" >0.00</text>
<path d="M662.13,130.47 A25.3,25.3 0 1 1 691.87,130.47" fill="none" stroke="#000000" stroke-opacity="0.2" stroke-width="5.399999999999999"/>
<circle cx="677" cy="110" r="20.2" fill="url(#gKnob)"/>
<polygon fill="#0c0c0e" points="666.02,125.12 666.89,116.76 673.69,121.70"/>
<text x="677" y="61" font-size="11.2" fill="#f0f0f2" text-anchor="middle" textLength="30" lengthAdjust="spacingAndGlyphs" stroke="#f0f0f2" stroke-width="0.22" >Make-</text>
<text x="677" y="74" font-size="11.2" fill="#f0f0f2" text-anchor="middle" textLength="34" lengthAdjust="spacingAndGlyphs" stroke="#f0f0f2" stroke-width="0.22" >up (dB)</text>
<rect x="630.2" y="138.2" width="21.0" height="23.6" rx="4.3" ry="4.3" fill="#000" fill-opacity="0.2"/>
<rect x="631" y="139" width="19.4" height="22" rx="3.5" ry="3.5" fill="url(#gBtn)"/>
<text x="640.9" y="153.8" font-size="10.8" fill="#1a1a1a" text-anchor="middle" textLength="6.3" lengthAdjust="spacingAndGlyphs" stroke="#1a1a1a" stroke-width="0.22" >A</text>
<rect x="653" y="140.4" width="48" height="19.6" fill="#c5c7cf"/>
<text x="677.0" y="154.0" font-size="12" fill="#1d1e23" text-anchor="middle" textLength="23.7" lengthAdjust="spacingAndGlyphs" stroke="#1d1e23" stroke-width="0.22" >0.00</text>
<path d="M664.19,247.64 A21.8,21.8 0 1 1 689.81,247.64" fill="none" stroke="#000000" stroke-opacity="0.2" stroke-width="4.399999999999999"/>
<path d="M664.19,247.64 A21.8,21.8 0 0 1 655.32,232.28" fill="none" stroke="#b88a1f" stroke-width="4.399999999999999"/>
<circle cx="677" cy="230" r="17.4" fill="url(#gKnob)"/>
<polygon fill="#0c0c0e" points="660.99,231.68 666.85,227.43 667.60,234.63"/>
<text x="677" y="185" font-size="11.2" fill="#f0f0f2" text-anchor="middle" textLength="37.2" lengthAdjust="spacingAndGlyphs" stroke="#f0f0f2" stroke-width="0.22" >Latency</text>
<text x="677" y="197.6" font-size="11.2" fill="#f0f0f2" text-anchor="middle" textLength="21.6" lengthAdjust="spacingAndGlyphs" stroke="#f0f0f2" stroke-width="0.22" >(ms)</text>
<rect x="647" y="256" width="60" height="19.6" fill="#c5c7cf"/>
<text x="677.0" y="269.6" font-size="12" fill="#1d1e23" text-anchor="middle" textLength="23.2" lengthAdjust="spacingAndGlyphs" stroke="#1d1e23" stroke-width="0.22" >5.00</text>
<path d="M662.13,370.47 A25.3,25.3 0 1 1 691.87,370.47" fill="none" stroke="#000000" stroke-opacity="0.2" stroke-width="5.399999999999999"/>
<path d="M662.13,370.47 A25.3,25.3 0 1 1 691.87,370.47" fill="none" stroke="#b88a1f" stroke-width="5.399999999999999"/>
<circle cx="677" cy="350" r="20.2" fill="url(#gKnob)"/>
<polygon fill="#0c0c0e" points="687.98,365.12 680.31,361.70 687.11,356.76"/>
<text x="677" y="301" font-size="11.2" fill="#f0f0f2" text-anchor="middle" textLength="38" lengthAdjust="spacingAndGlyphs" stroke="#f0f0f2" stroke-width="0.22" >Channel</text>
<text x="677" y="313.6" font-size="11.2" fill="#f0f0f2" text-anchor="middle" textLength="52" lengthAdjust="spacingAndGlyphs" stroke="#f0f0f2" stroke-width="0.22" >Linking (%)</text>
<rect x="647" y="380.4" width="60" height="19.6" fill="#c5c7cf"/>
<text x="677.0" y="394.0" font-size="12" fill="#1d1e23" text-anchor="middle" textLength="30" lengthAdjust="spacingAndGlyphs" stroke="#1d1e23" stroke-width="0.22" >100.0</text>
<path d="M661.13,494.47 A25.3,25.3 0 1 1 690.87,494.47" fill="none" stroke="#000000" stroke-opacity="0.2" stroke-width="5.399999999999999"/>
<path d="M661.13,494.47 A25.3,25.3 0 1 1 690.87,494.47" fill="none" stroke="#b88a1f" stroke-width="5.399999999999999"/>
<circle cx="676" cy="474" r="20.2" fill="url(#gKnob)"/>
<polygon fill="#0c0c0e" points="686.98,489.12 679.31,485.70 686.11,480.76"/>
<text x="676" y="431.6" font-size="11.2" fill="#f0f0f2" text-anchor="middle" textLength="34.4" lengthAdjust="spacingAndGlyphs" stroke="#f0f0f2" stroke-width="0.22" >Mix (%)</text>
<rect x="652" y="504" width="48" height="20" fill="#c5c7cf"/>
<text x="676.0" y="517.6" font-size="12" fill="#1d1e23" text-anchor="middle" textLength="30" lengthAdjust="spacingAndGlyphs" stroke="#1d1e23" stroke-width="0.22" >100.0</text>
<path d="M0,572.2 h144.5 a4,4 0 0 1 4,4 v23.8 h-148.5z" fill="url(#gBtn)"/>
<polygon points="23.4,589.2 32.3,589.2 27.85,584.4" fill="#111"/>
<text x="38.1" y="590" font-size="13" fill="#15161a" text-anchor="start" textLength="85.4" lengthAdjust="spacingAndGlyphs" stroke="#15161a" stroke-width="0.22" >Side chain filter</text>
<text x="185.9" y="589.3" font-size="11.8" fill="#f0f0f2" text-anchor="start" textLength="68.8" lengthAdjust="spacingAndGlyphs" stroke="#f0f0f2" stroke-width="0.22" >Oversampling:</text>
<rect x="260" y="576" width="59" height="19.8" fill="url(#gBtn)"/>
<text x="266.3" y="589.6" font-size="12.5" fill="#15161a" text-anchor="start" textLength="17" lengthAdjust="spacingAndGlyphs" stroke="#15161a" stroke-width="0.22" >Off</text>
<polygon points="307.8,584.6 313.8,584.6 310.8,580.6" fill="#3a3a3e"/><polygon points="307.8,587.4 313.8,587.4 310.8,591.4" fill="#3a3a3e"/>
<line x1="713.8" y1="600" x2="727" y2="586.8" stroke="#131316" stroke-width="1.7"/>
<line x1="718.5" y1="600" x2="727" y2="591.5" stroke="#131316" stroke-width="1.7"/>
<line x1="723.2" y1="600" x2="727" y2="596.2" stroke="#131316" stroke-width="1.7"/>
<line x1="711.4" y1="600" x2="727" y2="584.4" stroke="#939396" stroke-width="2"/>
<line x1="716.1" y1="600" x2="727" y2="589.1" stroke="#939396" stroke-width="2"/>
<line x1="720.8" y1="600" x2="727" y2="593.8" stroke="#939396" stroke-width="2"/>
<line x1="725.5" y1="600" x2="727" y2="598.5" stroke="#939396" stroke-width="2"/>
</svg>
</body></html>
